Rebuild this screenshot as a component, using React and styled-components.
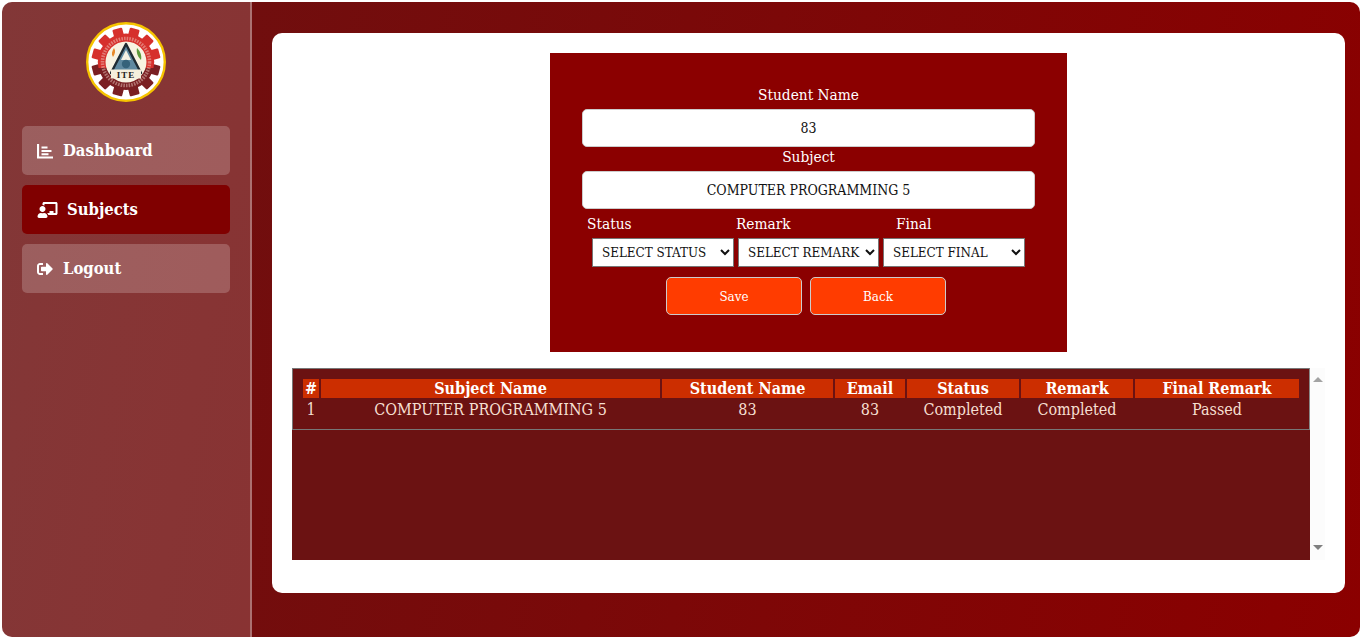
import React from "react";
import styled, { createGlobalStyle } from "styled-components";
import { FaChalkboardTeacher, FaSignOutAlt } from "react-icons/fa";

const SERIF = `"DejaVu Serif Condensed", "DejaVu Serif", serif`;

const Global = createGlobalStyle`
  html, body { margin: 0; height: 100%; background: #fff; overflow: hidden; }
  body { font-family: ${SERIF}; }
  * { box-sizing: border-box; }
`;
const Frame = styled.div`
  margin: 2px 3px 2px 2px; height: 635px; display: flex; border-radius: 10px; overflow: hidden;
  background: linear-gradient(100deg, #6b1111 0%, #8b0000 100%);
`;
const Sidebar = styled.aside`
  width: 250px; flex: none; padding: 20px 20px 0; display: flex; flex-direction: column;
  background: rgba(255,255,255,0.16); border-right: 2px solid rgba(255,255,255,0.3);
`;
const LogoWrap = styled.div`display: flex; justify-content: center; margin-bottom: 24px;`;
const Nav = styled.nav`display: flex; flex-direction: column; gap: 10px;`;
const NavItem = styled.a`
  height: 49px; border-radius: 5px; display: flex; align-items: center; padding-left: 15px;
  gap: ${p => p.$gap}px; color: #fff; font-weight: 700; font-size: 16.5px;
  background: ${p => p.$active ? "#800000" : "rgba(255,255,255,0.2)"};
  svg { width: ${p => p.$icon}px; height: 16px; flex: none; }
`;
const Main = styled.main`flex: 1; padding: 31px 15px 0 20px;`;
const Card = styled.section`
  height: 560px; background: #fff; border-radius: 10px; padding: 20px 20px 0;
  display: flex; flex-direction: column; align-items: flex-start;
`;
const FormPanel = styled.form`
  width: 517px; height: 299px; margin-left: 258px; margin-bottom: 16px; background: #8b0000;
  padding: 33px 32px 0; display: flex; flex-direction: column; align-items: center; color: #fff;
`;
const FieldLabel = styled.label`font-size: 15.3px; line-height: 18px; height: 23px; display: block;`;
const TextInput = styled.input`
  width: 453px; height: 38px; flex: none; border: 1px solid #ccc; border-radius: 5px; background: #fff;
  text-align: center; font: 14px ${SERIF}; color: #111; padding: 0;
  margin-bottom: ${p => p.$mb}px;
`;
const LabelRow = styled.div`
  width: 453px; display: grid; grid-template-columns: 149px 160px 1fr; padding-left: 5px;
  font-size: 15.3px; line-height: 18px; height: 20px; margin-bottom: 3px; margin-top: 6px;
`;
const SelectRow = styled.div`display: flex; gap: 4px; margin-bottom: 10px;`;
const Select = styled.select`
  width: ${p => p.$w}px; height: 29px; background: #fff; color: #111; border: 1px solid #767676;
  font: 13.3px ${SERIF}; padding: 0 0 0 5px;
`;
const ButtonRow = styled.div`display: flex; gap: 8px; margin-right: 5px;`;
const ActionButton = styled.button`
  width: 136px; height: 38px; border-radius: 5px; border: 1px solid #ccc; background: #ff3c00;
  color: #fff; font: 13.3px ${SERIF};
`;
const TableArea = styled.div`width: 1033px; height: 192px; display: flex;`;
const TableScroll = styled.div`width: 1018px; background: #6b1212; flex: none;`;
const TableBox = styled.div`height: 62px; border: 1px solid #777; border-right-color: #888; padding: 8px 8px 0;`;
const Table = styled.table`
  width: 100%; table-layout: fixed; border-collapse: separate; border-spacing: 2px; color: #f5dfd0;
`;
const Th = styled.th`
  background: #cc2e00; color: #fff; font-size: 16px; line-height: 19px; height: 19px; padding: 0; font-weight: 700;
  white-space: nowrap;
`;
const Td = styled.td`font-size: 16px; line-height: 20px; padding: 0; text-align: center; white-space: nowrap;`;
const ScrollBar = styled.div`
  width: 15px; background: #fcfcfc; display: flex; flex-direction: column; justify-content: space-between;
  align-items: center; padding: 9px 0 10px;
`;
const Arrow = styled.div`
  width: 0; height: 0; border-left: 5px solid transparent; border-right: 5px solid transparent;
  ${p => p.$up ? "border-bottom: 5px solid #a3a3a3;" : "border-top: 5px solid #808080;"}
`;

const Logo = () => {
  const teeth = Array.from({ length: 12 }, (_, i) => i * 30 + 15);
  return (
    <svg width="80" height="80" viewBox="0 0 80 80">
      <circle cx="40" cy="40" r="38.8" fill="#fff" stroke="#f6c400" strokeWidth="2.4" />
      {teeth.map(a => (
        <rect key={a} x="35" y="5.5" width="10" height="9" rx="1.2"
          fill={a > 100 && a < 260 ? "#7a1f22" : "#d6302c"} transform={`rotate(${a} 40 40)`} />
      ))}
      <path d="M12.5 46A28.2 28.2 0 1 1 67.5 46Z" fill="#d6302c" />
      <path d="M12.5 46A28.2 28.2 0 0 0 67.5 46Z" fill="#7a1f22" />
      <circle cx="40" cy="40" r="23.5" fill="none" stroke="#f3d9cf" strokeOpacity=".45" strokeWidth="3.6" strokeDasharray="1.6 1.1" />
      <circle cx="40" cy="40" r="20.5" fill="#f8f3e2" />
      <path d="M40 22 L55 51 L25 51 Z" fill="#5f89a0" stroke="#1e2b33" strokeWidth="2.4" strokeLinejoin="round" />
      <path d="M40 28 L45 38 L35 38 Z" fill="#f4f1e4" />
      <circle cx="40" cy="42" r="4.2" fill="#35627a" />
      <path d="M51 26c3 3 5 7 4 12-3-3-5-7-4-12Z" fill="#5d9a3c" />
      <path d="M28 26c-2 3-3 6-1 9 2-3 3-6 1-9Z" fill="#e88a2a" />
      <rect x="25" y="47.5" width="30" height="9" fill="#f5efdc" />
      <text x="40" y="55.5" textAnchor="middle" fontSize="9" fontWeight="700" letterSpacing="1" fontFamily="Liberation Serif, serif" fill="#222">ITE</text>
    </svg>
  );
};

const ChartIcon = () => (
  <svg viewBox="0 0 16 16" fill="none" stroke="#fff" strokeWidth="2">
    <path d="M1 1V14.5H16" strokeWidth="2.2" />
    <path d="M4.5 4.5H10.5M4.5 8H14.5M4.5 11.2H11.5" />
  </svg>
);

const cols = [16, 339, 171, 70, 112, 112, 164];

export default function App() {
  return (
    <>
      <Global />
      <Frame>
        <Sidebar>
          <LogoWrap><Logo /></LogoWrap>
          <Nav>
            <NavItem $gap={10} $icon={16}><ChartIcon />Dashboard</NavItem>
            <NavItem $active $gap={9} $icon={21}><FaChalkboardTeacher />Subjects</NavItem>
            <NavItem $gap={10} $icon={16}><FaSignOutAlt />Logout</NavItem>
          </Nav>
        </Sidebar>
        <Main>
          <Card>
            <FormPanel>
              <FieldLabel>Student Name</FieldLabel>
              <TextInput defaultValue="83" readOnly $mb={1} />
              <FieldLabel>Subject</FieldLabel>
              <TextInput defaultValue="COMPUTER PROGRAMMING 5" readOnly $mb={0} />
              <LabelRow><span>Status</span><span>Remark</span><span>Final</span></LabelRow>
              <SelectRow>
                <Select $w={142}><option>SELECT STATUS</option></Select>
                <Select $w={141}><option>SELECT REMARK</option></Select>
                <Select $w={142}><option>SELECT FINAL</option></Select>
              </SelectRow>
              <ButtonRow>
                <ActionButton type="button">Save</ActionButton>
                <ActionButton type="button">Back</ActionButton>
              </ButtonRow>
            </FormPanel>
            <TableArea>
              <TableScroll>
                <TableBox>
                  <Table>
                    <colgroup>{cols.map((w, i) => <col key={i} width={w} />)}</colgroup>
                    <thead>
                      <tr>
                        {["#", "Subject Name", "Student Name", "Email", "Status", "Remark", "Final Remark"].map(h => <Th key={h}>{h}</Th>)}
                      </tr>
                    </thead>
                    <tbody>
                      <tr>
                        {["1", "COMPUTER PROGRAMMING 5", "83", "83", "Completed", "Completed", "Passed"].map((c, i) => <Td key={i}>{c}</Td>)}
                      </tr>
                    </tbody>
                  </Table>
                </TableBox>
              </TableScroll>
              <ScrollBar><Arrow $up /><Arrow /></ScrollBar>
            </TableArea>
          </Card>
        </Main>
      </Frame>
    </>
  );
}
